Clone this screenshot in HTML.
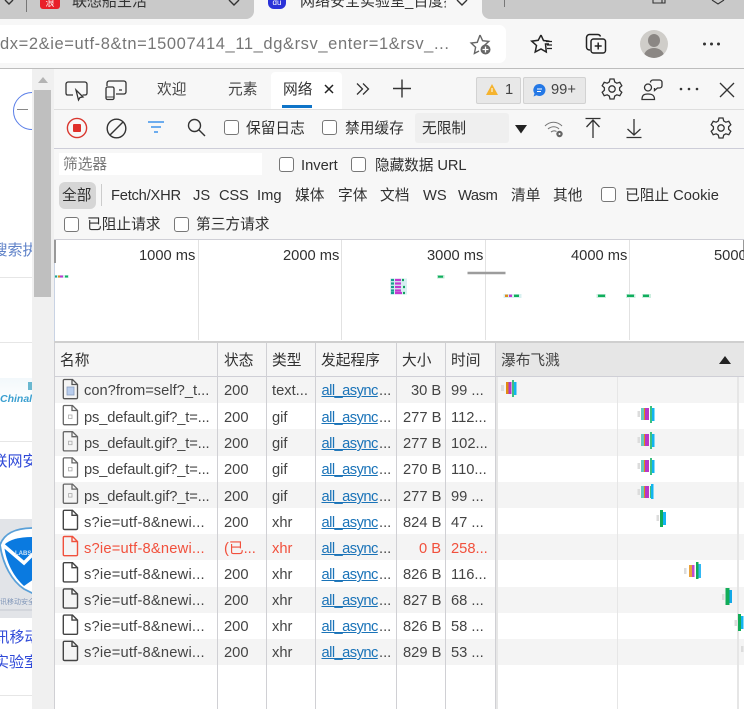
<!DOCTYPE html>
<html lang="zh">
<head>
<meta charset="utf-8">
<title>DevTools</title>
<style>
html,body{margin:0;padding:0}
body{width:744px;height:709px;position:relative;overflow:hidden;background:#fff;font-family:"Liberation Sans","Noto Sans CJK SC",sans-serif;font-size:14.7px;color:#303030}
div,span,svg{position:absolute}
.t{white-space:nowrap;line-height:20px;margin-top:1px}
.c{color:#444}
.b{width:13px;height:13px;border:1.3px solid #777;border-radius:3px;background:#fff}
.l{color:#1a73b8;text-decoration:underline;letter-spacing:-.55px}
.s{letter-spacing:.2px}
.p{letter-spacing:-.15px}
.r{left:55px;width:689px;height:26.2px}
.g{background:#f4f4f4}
.v{width:1px;background:#d0d0d4}
.h{height:1px;background:#e6e6e6;left:0;width:32px}
svg{overflow:visible}
</style>
</head>
<body>

<!-- tab strip -->
<div style="left:0;top:0;width:744px;height:19px;background:#c9c9c9"></div>
<div style="left:0;top:19px;width:744px;height:49px;background:#f7f7f7"></div>
<div style="left:254px;top:0;width:228px;height:19px;background:#f7f7f7"></div>
<div style="left:244px;top:9px;width:10px;height:10px;background:#f7f7f7"></div>
<div style="left:244px;top:9px;width:10px;height:10px;background:#c9c9c9;border-bottom-right-radius:8px"></div>
<div style="left:482px;top:9px;width:10px;height:10px;background:#f7f7f7"></div>
<div style="left:482px;top:9px;width:10px;height:10px;background:#c9c9c9;border-bottom-left-radius:8px"></div>
<div style="left:26px;top:0;width:1px;height:12px;background:#777"></div>
<div style="left:504px;top:0;width:1px;height:7px;background:#777"></div>
<div style="left:40px;top:0;width:20px;height:9px;background:#e8202a;border-radius:0 0 3px 3px;color:#fff;font-size:9px;line-height:7px;text-align:center">浪</div>
<div class="t" style="left:72px;top:-9px;font-size:15px;color:#333">联想船生活</div>
<svg style="left:0;top:0" width="744" height="20" fill="none" stroke="#333" stroke-width="1.4">
<path d="M5 0l4 4 4-4M229 0l5 5 5-5M457 0l5 5 5-5"/>
<path d="M653 0v3h9v-3M662 3h3v-3" stroke-width="1.1"/>
<path d="M712 0l6 4 6-4" stroke-width="1.1"/>
</svg>
<div style="left:268px;top:0;width:18px;height:9px;background:#2a32d8;border-radius:0 0 6px 6px;color:#fff;font-size:8px;line-height:6px;text-align:center">du</div>
<div class="t" style="left:300px;top:-9px;width:146px;overflow:hidden;font-size:15px;color:#333">网络安全实验室_百度搜索</div>

<!-- address -->
<div style="left:0;top:25px;width:506px;height:38px;background:#fff;border-radius:0 7px 7px 0"></div>
<div class="t" style="left:0;top:33px;font-size:16.5px;color:#767676;letter-spacing:.6px">dx=2&amp;ie=utf-8&amp;tn=15007414_11_dg&amp;rsv_enter=1&amp;rsv_...</div>
<svg style="left:470px;top:33px" width="24" height="24" fill="none" stroke="#666" stroke-width="1.4">
<path d="M10 2l2.6 5.700 6.200.7-4.600 4.200 1 3.400M9 18l-4.600 2.400 1.200-6.100-4.500-4.300 6.200-.7L10 2"/>
<circle cx="15.500" cy="16.500" r="5" fill="#666" stroke="none"/>
<path d="M15.500 13.500v6M12.500 16.500h6" stroke="#fff" stroke-width="1.3"/>
</svg>
<svg style="left:530px;top:33px" width="24" height="22" fill="none" stroke="#222" stroke-width="1.5">
<path d="M11 2l2.500 5.500 6 .7M19 11h-3.500l.8 8-5.300-3-5.800 3 1.300-6.500-4.800-4.300 6.500-.9L11 2"/>
<path d="M16 8.500h6M17 12h5M17 15.500h5" stroke-width="1.200"/>
</svg>
<svg style="left:585px;top:33px" width="24" height="22" fill="none" stroke="#222" stroke-width="1.5">
<path d="M5 17c-2 0-3.500-1-3.500-3V4.500C1.500 3 3 1.500 4.500 1.500h8c1.500 0 2.500.7 3 2"/>
<rect x="6" y="6" width="14.500" height="14" rx="2.500"/>
<path d="M13.200 9.500v7M9.700 13h7"/>
</svg>
<div style="left:640px;top:30px;width:28px;height:28px;border-radius:50%;background:#cfcdc9;overflow:hidden">
<div style="left:8px;top:4px;width:12px;height:13px;border-radius:50%;background:#8b8784"></div>
<div style="left:4px;top:18px;width:20px;height:16px;border-radius:50%;background:#8b8784"></div>
</div>
<svg style="left:700px;top:40px" width="24" height="8" fill="#333"><circle cx="4.500" cy="4" r="1.500"/><circle cx="11.500" cy="4" r="1.500"/><circle cx="18.500" cy="4" r="1.500"/></svg>
<div style="left:0;top:68px;width:744px;height:1px;background:#bdbdbd"></div>

<!-- page behind -->
<div style="left:0;top:69px;width:32px;height:640px;background:#fff;overflow:hidden">
<svg style="left:13px;top:23px" width="40" height="38" fill="none" stroke="#5b7fe8" stroke-width="1"><circle cx="19" cy="19" r="18.500"/></svg>
<div style="left:17px;top:40px;width:11px;height:1px;background:#888"></div>
<div class="t" style="left:-7.500px;top:171px;color:#5f82c8;font-size:15px">搜索执</div>
<div class="h" style="top:208px"></div>
<div class="h" style="top:273px"></div>
<div style="left:0;top:309px;width:32px;height:24px;background:linear-gradient(#f2f8fb,#fff)"></div>
<div style="left:28px;top:313px;width:4px;height:8px;background:#6ab8d0"></div>
<div style="left:0;top:324px;font:italic bold 10.500px/12px 'Liberation Sans',sans-serif;color:#3a9fd0;white-space:nowrap">Chinalabs</div>
<div class="h" style="top:372px"></div>
<div class="t" style="left:-7.500px;top:382px;color:#2f49d8;font-size:15px">联网安</div>
<div style="left:0;top:450px;width:32px;height:99px;background:#e2e4e8"></div>
<svg style="left:0;top:450px;overflow:hidden" width="32" height="99">
<path d="M0 26C4 15 14 9 34 9v66L24 70C12 62 3 46 0 26z" fill="#fff" stroke="#5aa0d8" stroke-width="1.800"/>
<path d="M4 26C10 20 20 18 34 18V60L24 67C14 58 6 44 4 26z" fill="#0a7ae0"/>
<path d="M3 26L24 44 34 34" fill="none" stroke="#fff" stroke-width="3.500"/>
<text x="15" y="36" font-size="6" font-weight="bold" fill="#cfe3f6" font-family="Liberation Sans">LABS</text>
<text x="0" y="85" font-size="7" fill="#7f95b8" font-family="Noto Sans CJK SC">讯移动安全</text>
<path d="M0 91h32" stroke="#c4c8d0" stroke-width="1"/>
</svg>
<div class="t" style="left:-5.500px;top:558px;color:#2f49d8;font-size:15px">讯移动</div>
<div class="t" style="left:-6px;top:583px;color:#2f49d8;font-size:15px">实验室</div>
<div class="h" style="top:626px"></div>
</div>

<!-- scrollbar -->
<div style="left:32px;top:69px;width:22px;height:640px;background:#f0f0f0"></div>
<div style="left:34px;top:90px;width:17px;height:207px;background:#bfbfbf"></div>
<svg style="left:37px;top:76px" width="12" height="8"><path d="M1 7h10L6 1z" fill="#b4b4b4"/></svg>

<!-- devtools bg -->
<div style="left:54px;top:69px;width:690px;height:171px;background:#f7f7f7"></div>
<div style="left:54px;top:109px;width:690px;height:1px;background:#dedede"></div>
<div style="left:271px;top:72px;width:71px;height:37px;background:#fff;border-radius:4px 4px 0 0"></div>
<div style="left:282px;top:105px;width:30px;height:3px;background:#0f74c8"></div>

<!-- devtools header icons -->
<svg style="left:54px;top:69px" width="690" height="40" fill="none" stroke="#333" stroke-width="1.300">
<path d="M19 26h-5.500C12 26 12 25 12 24V15c0-1 1-2 2-2h17c1 0 2 1 2 2v9c0 1-.5 2-2 2h-2.500"/>
<path d="M22 21l7 7-3 .5-1.500 2.500z" fill="#fff"/>
<rect x="52" y="18" width="8" height="12.500" rx="1.500"/>
<path d="M52 28h8" stroke-width=".9"/>
<path d="M53 17v-3c0-1 1-2 2-2h15c1 0 2 1 2 2v9c0 1-1 2-2 2H62M65 21h3"/>
</svg>
<div class="t c" style="left:157px;top:79px">欢迎</div>
<div class="t c" style="left:228px;top:79px">元素</div>
<div class="t" style="left:283px;top:79px;color:#333">网络</div>
<svg style="left:324px;top:84px" width="11" height="11" fill="none" stroke="#222" stroke-width="1.500"><path d="M1 1l8 8M9 1l-8 8"/></svg>
<svg style="left:356px;top:82px" width="14" height="14" fill="none" stroke="#333" stroke-width="1.300"><path d="M1 1.500l5.500 5.500L1 12.500M7 1.500l5.500 5.500L7 12.500"/></svg>
<svg style="left:392px;top:79px" width="20" height="20" fill="none" stroke="#333" stroke-width="1.400"><path d="M10 .5v18M1 9.500h18"/></svg>
<div style="left:476px;top:77px;width:43px;height:25px;background:#e8e8e8;border:1px solid #d2d2d2;border-radius:2px"></div>
<svg style="left:486px;top:84px" width="12" height="11"><path d="M6 0l6 11H0z" fill="#f5b32e"/><path d="M6 4v4" stroke="#fff" stroke-width="1"/></svg>
<div class="t c" style="left:505px;top:79px">1</div>
<div style="left:523px;top:77px;width:61px;height:25px;background:#e8e8e8;border:1px solid #d2d2d2;border-radius:2px"></div>
<svg style="left:533px;top:84px" width="13" height="13"><path d="M6.500 0a6 6 0 1 1-3 11.200L.5 12.500l1-3A6 6 0 0 1 6.500 0z" fill="#2478e6"/><path d="M4 5h5M4 7.500h4" stroke="#fff" stroke-width=".9"/></svg>
<div class="t c" style="left:551px;top:79px">99+</div>
<svg style="left:600px;top:77px" width="24" height="24" viewBox="0 0 24 24" fill="none" stroke="#333" stroke-width="1.300">
<path d="M10 2h4l.7 3 2.100 1.200 3-.9 2 3.400-2.200 2.100v2.400l2.200 2.100-2 3.400-3-.9L14.700 19 14 22h-4l-.7-3-2.100-1.200-3 .9-2-3.400 2.200-2.100v-2.400L2.200 8.700l2-3.400 3 .9L9.300 5z"/>
<circle cx="12" cy="12" r="3.200"/>
</svg>
<svg style="left:640px;top:78px" width="24" height="24" fill="none" stroke="#333" stroke-width="1.300">
<circle cx="8" cy="9.500" r="3.500"/>
<path d="M2 21.500c0-4 1.500-5.500 6-5.500s6.500 1.500 6.500 5.500z"/>
<path d="M10.500 4.500c0-1.500 1-2.500 2.500-2.500h6.500c1.500 0 2.500 1 2.500 2.500v3c0 1.500-1 2.500-2.500 2.500h-2l-3 2.500v-2.500"/>
</svg>
<svg style="left:678px;top:85px" width="22" height="8" fill="#333"><circle cx="3" cy="4" r="1.300"/><circle cx="11" cy="4" r="1.300"/><circle cx="19" cy="4" r="1.300"/></svg>
<svg style="left:719px;top:82px" width="16" height="16" fill="none" stroke="#333" stroke-width="1.300"><path d="M1 1l14 14M15 1L1 15"/></svg>

<!-- toolbar -->
<svg style="left:66px;top:117px" width="22" height="22"><circle cx="11" cy="11" r="9.600" fill="none" stroke="#d9362e" stroke-width="1.400"/><rect x="7" y="7" width="8" height="8" rx="1" fill="#e0302a"/></svg>
<svg style="left:106px;top:118px" width="21" height="21" fill="none" stroke="#333" stroke-width="1.400"><circle cx="10.500" cy="10.500" r="9.300"/><path d="M4 17L17 4"/></svg>
<svg style="left:147px;top:120px" width="18" height="14" fill="none" stroke="#1a80e8" stroke-width="1.300"><path d="M1 2h16M4 7h10M7 12h4"/></svg>
<svg style="left:187px;top:118px" width="19" height="19" fill="none" stroke="#333" stroke-width="1.400"><circle cx="7.500" cy="7.500" r="6"/><path d="M12 12l6 6"/></svg>
<div class="b" style="left:224px;top:120px"></div>
<div class="t" style="left:246px;top:118px">保留日志</div>
<div class="b" style="left:322px;top:120px"></div>
<div class="t" style="left:345px;top:118px">禁用缓存</div>
<div style="left:415px;top:113px;width:94px;height:30px;background:#efefef;border-radius:3px"></div>
<div class="t" style="left:422px;top:118px">无限制</div>
<svg style="left:515px;top:125px" width="12" height="9"><path d="M0 0h12L6 8.500z" fill="#222"/></svg>
<svg style="left:544px;top:119px" width="22" height="20" fill="none" stroke="#777" stroke-width="1.100">
<path d="M1 7c5-5 12-5 17 0M4 10c3.500-3 8-3 11 0M7 13c2-1.500 4-1.500 5.500-.5"/>
<circle cx="15.500" cy="15" r="3.200" fill="#666" stroke="none"/><circle cx="15.500" cy="15" r="1" fill="#fff" stroke="none"/>
</svg>
<svg style="left:585px;top:117px" width="16" height="22" fill="none" stroke="#333" stroke-width="1.300"><path d="M.5 1.500h15M8 21V3M1.500 10L8 3l6.500 7"/></svg>
<svg style="left:626px;top:118px" width="16" height="21" fill="none" stroke="#333" stroke-width="1.300"><path d="M.5 19.500h15M8 1v16M1.500 11L8 17l6.500-6"/></svg>
<svg style="left:709px;top:116px" width="24" height="24" viewBox="0 0 24 24" fill="none" stroke="#333" stroke-width="1.300">
<path d="M10 2h4l.7 3 2.100 1.200 3-.9 2 3.400-2.200 2.100v2.400l2.200 2.100-2 3.400-3-.9L14.700 19 14 22h-4l-.7-3-2.100-1.200-3 .9-2-3.400 2.200-2.100v-2.400L2.200 8.700l2-3.400 3 .9L9.300 5z"/>
<circle cx="12" cy="12" r="3.200"/>
</svg>
<div style="left:54px;top:148px;width:690px;height:1px;background:#cdcdd8"></div>

<!-- filter row -->
<div style="left:59px;top:153px;width:203px;height:22px;background:#fff"></div>
<div class="t" style="left:63px;top:154px;color:#777">筛选器</div>
<div class="b" style="left:279px;top:157px"></div>
<div class="t" style="left:301px;top:155px">Invert</div>
<div class="b" style="left:351px;top:157px"></div>
<div class="t" style="left:375px;top:155px;letter-spacing:-.1px">隐藏数据 URL</div>

<!-- type row -->
<div style="left:59px;top:182px;width:37px;height:27px;background:#d6d6d6;border-radius:6px"></div>
<div style="left:101px;top:184px;width:1px;height:22px;background:#ccc"></div>
<div class="t" style="left:62px;top:185px">全部</div>
<div class="t" style="left:111px;top:185px;letter-spacing:-.22px">Fetch/XHR</div>
<div class="t" style="left:193px;top:185px">JS</div>
<div class="t" style="left:219px;top:185px;letter-spacing:-.2px">CSS</div>
<div class="t" style="left:257px;top:185px">Img</div>
<div class="t" style="left:295px;top:185px">媒体</div>
<div class="t" style="left:338px;top:185px">字体</div>
<div class="t" style="left:380px;top:185px">文档</div>
<div class="t" style="left:423px;top:185px">WS</div>
<div class="t" style="left:458px;top:185px;letter-spacing:-.4px">Wasm</div>
<div class="t" style="left:511px;top:185px">清单</div>
<div class="t" style="left:553px;top:185px">其他</div>
<div class="b" style="left:601px;top:187px"></div>
<div class="t" style="left:625px;top:185px">已阻止 Cookie</div>
<div class="b" style="left:64px;top:217px"></div>
<div class="t" style="left:87px;top:214px">已阻止请求</div>
<div class="b" style="left:174px;top:217px"></div>
<div class="t" style="left:196px;top:214px">第三方请求</div>
<div style="left:54px;top:239px;width:690px;height:1px;background:#cfcfd6"></div>

<!-- overview -->
<div style="left:54px;top:240px;width:690px;height:101px;background:#fff"></div>
<div style="left:54px;top:240px;width:1px;height:103px;background:#c9d3e4"></div>
<div style="left:54px;top:240px;width:1.500px;height:23px;background:#999"></div>
<div style="left:197.500px;top:240px;width:1px;height:100px;background:#e2e2e2"></div>
<div style="left:341px;top:240px;width:1px;height:100px;background:#e2e2e2"></div>
<div style="left:485px;top:240px;width:1px;height:100px;background:#e2e2e2"></div>
<div style="left:629px;top:240px;width:1px;height:100px;background:#e2e2e2"></div>
<div style="left:743px;top:240px;width:1px;height:18px;background:#999"></div>
<div class="t" style="left:139px;top:245px">1000 ms</div>
<div class="t" style="left:283px;top:245px">2000 ms</div>
<div class="t" style="left:427px;top:245px">3000 ms</div>
<div class="t" style="left:571px;top:245px">4000 ms</div>
<div class="t" style="left:714px;top:245px">5000 ms</div>

<svg style="left:0;top:0" width="744" height="340">
<path d="M55 276.500h14" stroke="#d6f0ee" stroke-width="3"/>
<path d="M55 276.500h2" stroke="#1fa58e" stroke-width="2"/>
<path d="M58 276.500h2" stroke="#e08a1a" stroke-width="2"/>
<path d="M60 276.500h3" stroke="#c238d0" stroke-width="2"/>
<path d="M65 276.500h3" stroke="#12b060" stroke-width="2"/>
<rect x="390" y="278.500" width="17" height="16" fill="#d6eff2"/>
<g stroke-width="2.200">
<path d="M391 280h3M391 283.500h3M391 287h3M391 290.500h3M391 293h3" stroke="#15a08c"/>
<path d="M395 280h6M395 283.500h6M395 287h6M395 290.500h6M395 293h7" stroke="#c238d0"/>
<path d="M402 280h2M403 287h2M403 293h2" stroke="#12a060"/>
</g>
<rect x="437" y="275" width="7.500" height="3.500" fill="#bfe9d4"/><path d="M438 276.700h5" stroke="#10ae5c" stroke-width="2"/>
<path d="M467.500 273h38" stroke="#9c9c9c" stroke-width="2.500"/>
<rect x="503.500" y="294" width="18" height="4" fill="#d8f0f0"/>
<path d="M505 295.800h3" stroke="#e08a1a" stroke-width="2.400"/><path d="M509 295.800h3" stroke="#c238d0" stroke-width="2.400"/><path d="M514 295.800h5" stroke="#10ae5c" stroke-width="2.400"/>
<rect x="596.500" y="294" width="9.500" height="4" fill="#cdeee0"/><path d="M598 295.800h7" stroke="#10ae5c" stroke-width="2.400"/>
<rect x="626" y="294" width="9.500" height="4" fill="#cdeee0"/><path d="M627 295.800h7" stroke="#10ae5c" stroke-width="2.400"/>
<rect x="642" y="294" width="9" height="4" fill="#cdeee0"/><path d="M643 295.800h6" stroke="#10ae5c" stroke-width="2.400"/>
</svg>

<!-- table header -->
<div style="left:54px;top:341px;width:690px;height:2px;background:#cfcfcf"></div>
<div style="left:54px;top:343px;width:442px;height:33px;background:#f5f5f5"></div>
<div style="left:496px;top:343px;width:248px;height:33px;background:#e6e6e6"></div>
<div style="left:54px;top:376px;width:690px;height:1px;background:#cfcfd6"></div>
<div class="t" style="left:60px;top:350px">名称</div>
<div class="t" style="left:224px;top:350px">状态</div>
<div class="t" style="left:272px;top:350px">类型</div>
<div class="t" style="left:321px;top:350px">发起程序</div>
<div class="t" style="left:402px;top:350px">大小</div>
<div class="t" style="left:451px;top:350px">时间</div>
<div class="t" style="left:501px;top:350px;color:#444">瀑布飞溅</div>
<svg style="left:719px;top:355px" width="12" height="9"><path d="M0 9h12L6 1z" fill="#222"/></svg>

<!-- rows -->
<div class="r g" style="top:377px"></div>
<div class="r g" style="top:429.400px"></div>
<div class="r g" style="top:481.800px"></div>
<div class="r g" style="top:534.200px"></div>
<div class="r g" style="top:586.600px"></div>
<div class="r g" style="top:639px"></div>

<!-- column lines -->
<div class="v" style="left:54px;top:343px;height:366px"></div>
<div class="v" style="left:217px;top:343px;height:366px"></div>
<div class="v" style="left:266px;top:343px;height:366px"></div>
<div class="v" style="left:315px;top:343px;height:366px"></div>
<div class="v" style="left:396px;top:343px;height:366px"></div>
<div class="v" style="left:445px;top:343px;height:366px"></div>
<div class="v" style="left:495px;top:343px;height:366px"></div>
<div style="left:496px;top:377px;width:1.500px;height:332px;background:#e6e6e6"></div>
<div style="left:616.500px;top:377px;width:1.500px;height:332px;background:#e6e6e6"></div>
<div style="left:737px;top:377px;width:1.500px;height:332px;background:#e6e6e6"></div>

<!-- file icons -->
<svg style="left:0;top:0" width="100" height="709" fill="none" stroke="#555" stroke-width="1.300">
<path d="M64.500 379.500h8l5 5v13c0 .7-.5 1.200-1.200 1.200h-11.800c-.7 0-1.200-.5-1.200-1.200v-16.800c0-.7.500-1.200 1.200-1.200zM72 379.500v5h5.500"/>
<rect x="67" y="387" width="7" height="8" fill="#b8ccec" stroke="#8a9fc0" stroke-width=".8"/>
<g transform="translate(0 -1.500)">
<g stroke="#666">
<path d="M64.500 407h8l5 5v13c0 .7-.5 1.200-1.200 1.200h-11.800c-.7 0-1.200-.5-1.200-1.200v-16.800c0-.7.500-1.200 1.200-1.200zM72 407v5h5.500"/><rect x="68.500" y="416.500" width="3.500" height="3.500" stroke="#aaa" stroke-width=".8"/>
<path d="M64.500 433.200h8l5 5v13c0 .7-.5 1.200-1.200 1.200h-11.800c-.7 0-1.200-.5-1.200-1.200v-16.800c0-.7.500-1.200 1.200-1.200zM72 433.200v5h5.500"/><rect x="68.500" y="442.700" width="3.500" height="3.500" stroke="#aaa" stroke-width=".8"/>
<path d="M64.500 459.400h8l5 5v13c0 .7-.5 1.200-1.200 1.200h-11.800c-.7 0-1.200-.5-1.200-1.200v-16.800c0-.7.500-1.200 1.200-1.200zM72 459.400v5h5.500"/><rect x="68.500" y="468.900" width="3.500" height="3.500" stroke="#aaa" stroke-width=".8"/>
<path d="M64.500 485.600h8l5 5v13c0 .7-.5 1.200-1.200 1.200h-11.800c-.7 0-1.200-.5-1.200-1.200v-16.800c0-.7.500-1.200 1.200-1.200zM72 485.600v5h5.500"/><rect x="68.500" y="495.100" width="3.500" height="3.500" stroke="#aaa" stroke-width=".8"/>
</g>
<g stroke="#444" stroke-width="1.400">
<path d="M64.500 511.800h8l5 5v13c0 .7-.5 1.200-1.200 1.200h-11.800c-.7 0-1.200-.5-1.200-1.200v-16.800c0-.7.500-1.200 1.200-1.200zM72 511.800v5h5.500"/>
<path stroke="#f0503c" d="M64.500 538h8l5 5v13c0 .7-.5 1.200-1.200 1.200h-11.800c-.7 0-1.200-.5-1.200-1.200v-16.800c0-.7.500-1.200 1.200-1.200zM72 538v5h5.500"/>
<path d="M64.500 564.200h8l5 5v13c0 .7-.5 1.200-1.200 1.200h-11.800c-.7 0-1.200-.5-1.200-1.200v-16.800c0-.7.500-1.200 1.200-1.200zM72 564.200v5h5.500"/>
<path d="M64.500 590.400h8l5 5v13c0 .7-.5 1.200-1.200 1.200h-11.800c-.7 0-1.200-.5-1.200-1.200v-16.800c0-.7.500-1.200 1.200-1.200zM72 590.400v5h5.500"/>
<path d="M64.500 616.600h8l5 5v13c0 .7-.5 1.200-1.200 1.200h-11.800c-.7 0-1.200-.5-1.200-1.200v-16.800c0-.7.500-1.200 1.200-1.200zM72 616.600v5h5.500"/>
<path d="M64.500 642.800h8l5 5v13c0 .7-.5 1.200-1.200 1.200h-11.800c-.7 0-1.200-.5-1.200-1.200v-16.800c0-.7.500-1.200 1.200-1.200zM72 642.800v5h5.500"/>
</g>
</g>
</svg>

<!-- row text -->
<div class="t c" style="left:84px;top:380px">con?from=self?_t...</div><div class="t c" style="left:224px;top:380px">200</div><div class="t c" style="left:272px;top:380px">text...</div><div class="t l" style="left:321.500px;top:380px">all_async</div><div class="t c" style="left:379px;top:380px">...</div><div class="t c" style="left:411px;top:380px">30 B</div><div class="t c" style="left:451px;top:380px">99 ...</div>
<div class="t c p" style="left:84px;top:407px">ps_default.gif?_t=...</div><div class="t c" style="left:224px;top:407px">200</div><div class="t c" style="left:272px;top:407px">gif</div><div class="t l" style="left:321.500px;top:407px">all_async</div><div class="t c" style="left:379px;top:407px">...</div><div class="t c" style="left:403px;top:407px">277 B</div><div class="t c" style="left:451px;top:407px">112...</div>
<div class="t c p" style="left:84px;top:433px">ps_default.gif?_t=...</div><div class="t c" style="left:224px;top:433px">200</div><div class="t c" style="left:272px;top:433px">gif</div><div class="t l" style="left:321.500px;top:433px">all_async</div><div class="t c" style="left:379px;top:433px">...</div><div class="t c" style="left:403px;top:433px">277 B</div><div class="t c" style="left:451px;top:433px">102...</div>
<div class="t c p" style="left:84px;top:459px">ps_default.gif?_t=...</div><div class="t c" style="left:224px;top:459px">200</div><div class="t c" style="left:272px;top:459px">gif</div><div class="t l" style="left:321.500px;top:459px">all_async</div><div class="t c" style="left:379px;top:459px">...</div><div class="t c" style="left:403px;top:459px">270 B</div><div class="t c" style="left:451px;top:459px">110...</div>
<div class="t c p" style="left:84px;top:486px">ps_default.gif?_t=...</div><div class="t c" style="left:224px;top:486px">200</div><div class="t c" style="left:272px;top:486px">gif</div><div class="t l" style="left:321.500px;top:486px">all_async</div><div class="t c" style="left:379px;top:486px">...</div><div class="t c" style="left:403px;top:486px">277 B</div><div class="t c" style="left:451px;top:486px">99 ...</div>
<div class="t c s" style="left:84px;top:512px">s?ie=utf-8&amp;newi...</div><div class="t c" style="left:224px;top:512px">200</div><div class="t c" style="left:272px;top:512px">xhr</div><div class="t l" style="left:321.500px;top:512px">all_async</div><div class="t c" style="left:379px;top:512px">...</div><div class="t c" style="left:403px;top:512px">824 B</div><div class="t c" style="left:451px;top:512px">47 ...</div>
<div class="t s" style="left:84px;top:538px;color:#f1503c">s?ie=utf-8&amp;newi...</div><div class="t" style="left:224px;top:538px;color:#f1503c">(已...</div><div class="t" style="left:272px;top:538px;color:#f1503c">xhr</div><div class="t l" style="left:321.500px;top:538px">all_async</div><div class="t c" style="left:379px;top:538px">...</div><div class="t" style="left:419px;top:538px;color:#f1503c">0 B</div><div class="t" style="left:451px;top:538px;color:#f1503c">258...</div>
<div class="t c s" style="left:84px;top:564px">s?ie=utf-8&amp;newi...</div><div class="t c" style="left:224px;top:564px">200</div><div class="t c" style="left:272px;top:564px">xhr</div><div class="t l" style="left:321.500px;top:564px">all_async</div><div class="t c" style="left:379px;top:564px">...</div><div class="t c" style="left:403px;top:564px">826 B</div><div class="t c" style="left:451px;top:564px">116...</div>
<div class="t c s" style="left:84px;top:590px">s?ie=utf-8&amp;newi...</div><div class="t c" style="left:224px;top:590px">200</div><div class="t c" style="left:272px;top:590px">xhr</div><div class="t l" style="left:321.500px;top:590px">all_async</div><div class="t c" style="left:379px;top:590px">...</div><div class="t c" style="left:403px;top:590px">827 B</div><div class="t c" style="left:451px;top:590px">68 ...</div>
<div class="t c s" style="left:84px;top:616px">s?ie=utf-8&amp;newi...</div><div class="t c" style="left:224px;top:616px">200</div><div class="t c" style="left:272px;top:616px">xhr</div><div class="t l" style="left:321.500px;top:616px">all_async</div><div class="t c" style="left:379px;top:616px">...</div><div class="t c" style="left:403px;top:616px">826 B</div><div class="t c" style="left:451px;top:616px">58 ...</div>
<div class="t c s" style="left:84px;top:642px">s?ie=utf-8&amp;newi...</div><div class="t c" style="left:224px;top:642px">200</div><div class="t c" style="left:272px;top:642px">xhr</div><div class="t l" style="left:321.500px;top:642px">all_async</div><div class="t c" style="left:379px;top:642px">...</div><div class="t c" style="left:403px;top:642px">829 B</div><div class="t c" style="left:451px;top:642px">53 ...</div>

<!-- waterfall bars -->
<svg style="left:0;top:0" width="744" height="709" shape-rendering="crispEdges">
<rect x="501" y="385" width="3" height="6" fill="#dcdcdc"/><rect x="506" y="382" width="3" height="12" fill="#e28a12"/><rect x="508.500" y="382" width="3" height="12" fill="#b936c6"/><rect x="512" y="380" width="2" height="17" fill="#3cc080"/><rect x="514" y="382" width="2.500" height="13" fill="#12b4f0"/>

<g><rect x="637.500" y="411" width="2.500" height="6" fill="#dcdcdc"/><rect x="641" y="408" width="3" height="12" fill="#66c8c0"/><rect x="644" y="408" width="1.500" height="12" fill="#e28a12"/><rect x="645" y="408" width="4" height="12" fill="#b936c6"/><rect x="650" y="406" width="2" height="17" fill="#3cc080"/><rect x="652" y="408" width="2.500" height="13" fill="#12b4f0"/></g>
<g transform="translate(0 26)"><rect x="637.500" y="411" width="2.500" height="6" fill="#dcdcdc"/><rect x="641" y="408" width="3" height="12" fill="#66c8c0"/><rect x="644" y="408" width="1.500" height="12" fill="#e28a12"/><rect x="645" y="408" width="4" height="12" fill="#b936c6"/><rect x="650" y="406" width="2" height="17" fill="#3cc080"/><rect x="652" y="408" width="2.500" height="13" fill="#12b4f0"/></g>
<g transform="translate(0 52)"><rect x="637.500" y="411" width="2.500" height="6" fill="#dcdcdc"/><rect x="641" y="408" width="3" height="12" fill="#66c8c0"/><rect x="644" y="408" width="1.500" height="12" fill="#e28a12"/><rect x="645" y="408" width="4" height="12" fill="#b936c6"/><rect x="650" y="406" width="2" height="17" fill="#3cc080"/><rect x="652" y="408" width="2.500" height="13" fill="#12b4f0"/></g>
<g transform="translate(0 78)"><rect x="637.500" y="411" width="2.500" height="6" fill="#dcdcdc"/><rect x="641" y="408" width="3" height="12" fill="#66c8c0"/><rect x="644" y="408" width="1.500" height="12" fill="#e28a12"/><rect x="645" y="408" width="4" height="12" fill="#b936c6"/><rect x="650" y="408" width="1" height="12" fill="#3cc080"/><rect x="651" y="406" width="2.500" height="15" fill="#12b4f0"/></g>

<rect x="656.500" y="515" width="2.500" height="6" fill="#dcdcdc"/><rect x="660" y="510" width="3" height="17" fill="#12ac58"/><rect x="663" y="512" width="3" height="13" fill="#12b4f0"/>

<rect x="684" y="568" width="2.500" height="6" fill="#dcdcdc"/><rect x="689" y="565" width="3" height="12" fill="#e9a23a"/><rect x="692" y="565" width="2.500" height="12" fill="#c04cd0"/><rect x="696" y="562" width="2.500" height="17" fill="#12ac58"/><rect x="698.500" y="564" width="2.500" height="14" fill="#32b8f4"/>

<rect x="722" y="594" width="2.500" height="6" fill="#dcdcdc"/><rect x="725.500" y="588" width="4" height="17" fill="#12ac58"/><rect x="729.500" y="590" width="2.500" height="13" fill="#12a8e8"/>

<rect x="734.500" y="620" width="2.500" height="6" fill="#dcdcdc"/><rect x="738" y="614" width="3" height="17" fill="#12ac58"/><rect x="741" y="616" width="2.500" height="13" fill="#12b4f0"/>

<rect x="741" y="646" width="2.500" height="6" fill="#dcdcdc"/>
</svg>

</body>
</html>
